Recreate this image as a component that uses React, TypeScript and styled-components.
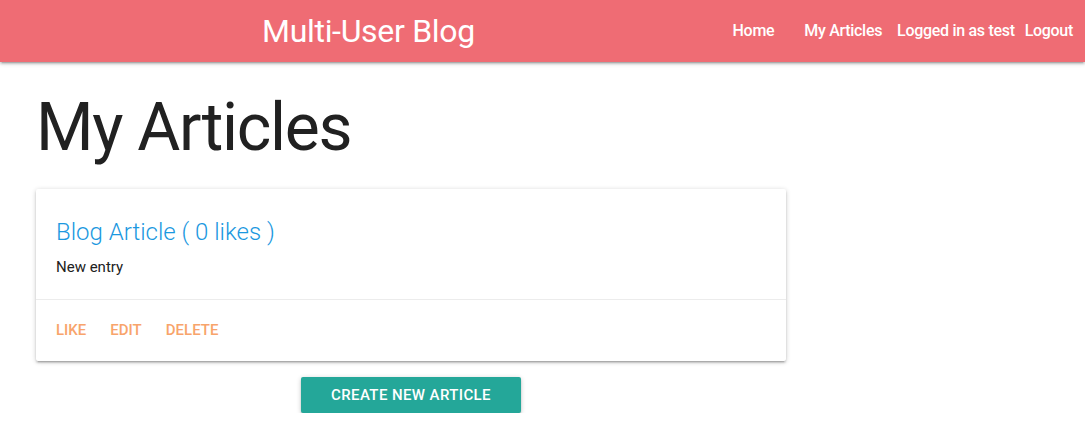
import React from "react";
import styled, { createGlobalStyle } from "styled-components";

const GlobalStyle = createGlobalStyle`
  html, body { margin: 0; padding: 0; background: #fff; }
  body { font-family: Roboto, "Liberation Sans", sans-serif; color: rgba(0,0,0,0.87); }
  * { box-sizing: border-box; }
`;

const NavBar = styled.nav`
  height: 62px;
  background: #ef6c74;
  box-shadow: 0 2px 2px 0 rgba(0,0,0,0.14), 0 3px 1px -2px rgba(0,0,0,0.12), 0 1px 5px 0 rgba(0,0,0,0.2);
  display: flex;
  align-items: center;
  color: #fff;
  padding-left: 262px;
  padding-right: 12px;
`;

const Brand = styled.a`
  font-size: 32px;
  letter-spacing: -0.3px;
  line-height: 62px;
  color: #fff;
  text-decoration: none;
  flex: 1;
`;

const NavList = styled.ul`
  list-style: none;
  display: flex;
  margin: 0;
  padding: 0;
`;

const NavItem = styled.li<{ $gap: number }>`
  margin-left: ${(p) => p.$gap}px;
`;

const NavLink = styled.a`
  color: #fff;
  text-decoration: none;
  font-size: 16px;
  font-weight: 500;
  line-height: 62px;
  letter-spacing: -0.3px;
`;

const Main = styled.main`
  padding: 0 36px;
  width: 822px;
`;

const Heading = styled.h1`
  font-size: 66px;
  font-weight: 400;
  line-height: 74px;
  margin: 29px 0 24px;
  color: #212121;
  letter-spacing: -1.3px;
`;

const Card = styled.div`
  background: #fff;
  box-shadow: 0 2px 2px 0 rgba(0,0,0,0.14), 0 3px 1px -2px rgba(0,0,0,0.12), 0 1px 5px 0 rgba(0,0,0,0.2);
  border-radius: 2px;
`;

const CardContent = styled.div`
  padding: 27px 20px 21px;
  border-bottom: 1px solid rgba(160,160,160,0.2);
`;

const CardTitle = styled.a`
  display: block;
  color: #1b98e0;
  font-size: 24px;
  font-weight: 300;
  line-height: 32px;
  text-decoration: none;
`;

const CardText = styled.p`
  margin: 8px 0 0;
  font-size: 15px;
  line-height: 22px;
  color: #212121;
`;

const CardActions = styled.div`
  display: flex;
  gap: 24px;
  padding: 19px 20px 20px;
`;

const ActionLink = styled.a`
  color: #f8a46b;
  font-size: 15px;
  font-weight: 500;
  line-height: 22px;
  text-transform: uppercase;
  text-decoration: none;
`;

const ButtonRow = styled.div`
  display: flex;
  justify-content: center;
  margin-top: 16px;
`;

const PrimaryButton = styled.button`
  width: 220px;
  height: 36px;
  border: none;
  border-radius: 2px;
  background: #24a799;
  color: #fff;
  font-family: Roboto, "Liberation Sans", sans-serif;
  font-size: 15px;
  font-weight: 500;
  text-transform: uppercase;
  letter-spacing: 0.4px;
  box-shadow: 0 2px 2px 0 rgba(0,0,0,0.14), 0 3px 1px -2px rgba(0,0,0,0.12), 0 1px 5px 0 rgba(0,0,0,0.2);
  cursor: pointer;
`;

export default function App() {
  return (
    <>
      <GlobalStyle />
      <NavBar>
        <Brand href="#">Multi-User Blog</Brand>
        <NavList>
          <NavItem $gap={0}><NavLink href="#">Home</NavLink></NavItem>
          <NavItem $gap={30}><NavLink href="#">My Articles</NavLink></NavItem>
          <NavItem $gap={15}><NavLink href="#">Logged in as test</NavLink></NavItem>
          <NavItem $gap={10}><NavLink href="#">Logout</NavLink></NavItem>
        </NavList>
      </NavBar>
      <Main>
        <Heading>My Articles</Heading>
        <Card>
          <CardContent>
            <CardTitle href="#">Blog Article ( 0 likes )</CardTitle>
            <CardText>New entry</CardText>
          </CardContent>
          <CardActions>
            <ActionLink href="#">Like</ActionLink>
            <ActionLink href="#">Edit</ActionLink>
            <ActionLink href="#">Delete</ActionLink>
          </CardActions>
        </Card>
        <ButtonRow>
          <PrimaryButton>Create new article</PrimaryButton>
        </ButtonRow>
      </Main>
    </>
  );
}
